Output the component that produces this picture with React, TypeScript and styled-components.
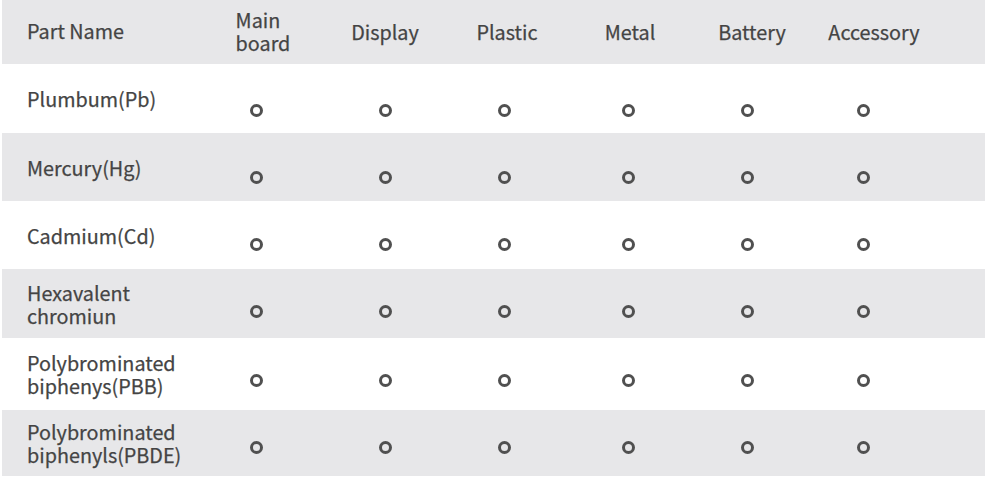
import React from "react";
import styled, { createGlobalStyle } from "styled-components";

const Global = createGlobalStyle`
  html, body { margin: 0; padding: 0; background: #ffffff; }
  body { font-family: "Noto Sans CJK SC", "Noto Sans", sans-serif; }
`;

const Table = styled.div`
  margin-left: 2px;
  display: grid;
  grid-template-columns: 193px 122px 136px 102px 146px 92px 140px 1fr;
  color: #444444;
  font-size: 19.8px;
  font-weight: 400;
  line-height: 23px;
  -webkit-text-stroke: 0.25px #444444;
`;

const Row = styled.div<{ $shade: boolean; $h: number }>`
  display: contents;
  & > div {
    background: ${(p) => (p.$shade ? "#e7e7e9" : "#ffffff")};
    height: ${(p) => p.$h}px;
  }
`;

const NameCell = styled.div<{ $head?: boolean }>`
  display: flex;
  align-items: center;
  padding-left: 25px;
  padding-bottom: ${(p) => (p.$head ? 4 : 0)}px;
  box-sizing: border-box;
`;

const HeadCell = styled.div<{ $dx: number }>`
  display: flex;
  align-items: center;
  justify-content: center;
  padding-left: ${(p) => p.$dx * 2}px;
  padding-bottom: 2px;
  box-sizing: border-box;
`;

const HeadLabel = styled.span`
  text-align: left;
  white-space: nowrap;
`;

const MarkCell = styled.div<{ $dy: number }>`
  display: flex;
  align-items: center;
  justify-content: center;
  padding-top: ${(p) => p.$dy}px;
  box-sizing: border-box;
`;

const Ring = styled.span`
  width: 13px;
  height: 13px;
  box-sizing: border-box;
  border: 3px solid #505050;
  border-radius: 50%;
`;

const Filler = styled.div``;

const headers: { label: React.ReactNode; dx: number }[] = [
  { label: <>Main<br />board</>, dx: 7 },
  { label: "Display", dx: 0 },
  { label: "Plastic", dx: 3 },
  { label: "Metal", dx: 2 },
  { label: "Battery", dx: 5 },
  { label: "Accessory", dx: 11 },
];

const rows: { name: React.ReactNode; h: number; dy: number }[] = [
  { name: "Plumbum(Pb)", h: 69, dy: 24 },
  { name: "Mercury(Hg)", h: 68, dy: 20 },
  { name: "Cadmium(Cd)", h: 68, dy: 18 },
  { name: <>Hexavalent<br />chromiun</>, h: 69, dy: 16 },
  { name: <>Polybrominated<br />biphenys(PBB)</>, h: 72, dy: 12 },
  { name: <>Polybrominated<br />biphenyls(PBDE)</>, h: 66, dy: 8 },
];

export default function App() {
  return (
    <>
      <Global />
      <Table>
        <Row $shade={true} $h={64}>
          <NameCell $head>Part Name</NameCell>
          {headers.map((h, i) => (
            <HeadCell key={i} $dx={h.dx}>
              <HeadLabel>{h.label}</HeadLabel>
            </HeadCell>
          ))}
          <Filler />
        </Row>
        {rows.map((r, i) => (
          <Row key={i} $shade={i % 2 === 1} $h={r.h}>
            <NameCell>{r.name}</NameCell>
            {headers.map((_, j) => (
              <MarkCell key={j} $dy={r.dy}>
                <Ring />
              </MarkCell>
            ))}
            <Filler />
          </Row>
        ))}
      </Table>
    </>
  );
}
